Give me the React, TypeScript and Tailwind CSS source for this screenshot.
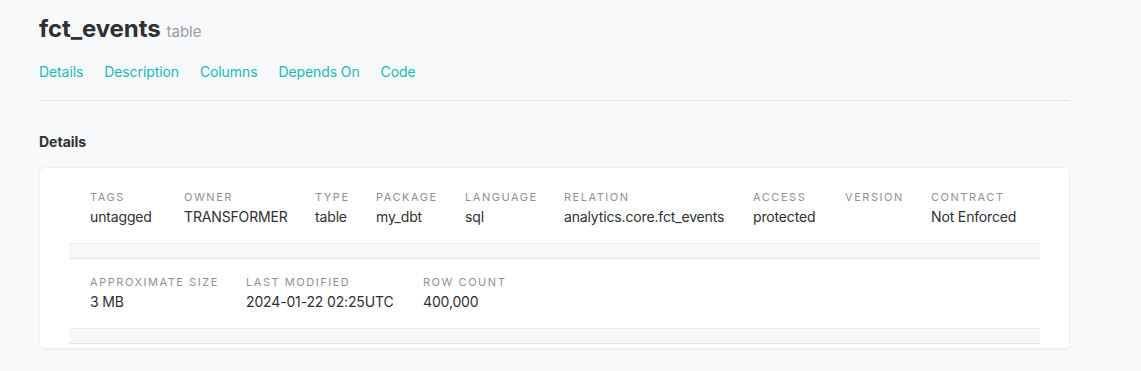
import React from "react";

type Field = { label: string; value: string; width?: string };

const rowOne: Field[] = [
  { label: "Tags", value: "untagged", width: "w-[94px]" },
  { label: "Owner", value: "TRANSFORMER", width: "w-[131px]" },
  { label: "Type", value: "table", width: "w-[61px]" },
  { label: "Package", value: "my_dbt", width: "w-[89px]" },
  { label: "Language", value: "sql", width: "w-[99px]" },
  { label: "Relation", value: "analytics.core.fct_events", width: "w-[189px]" },
  { label: "Access", value: "protected", width: "w-[92px]" },
  { label: "Version", value: "", width: "w-[86px]" },
  { label: "Contract", value: "Not Enforced" },
];

const rowTwo: Field[] = [
  { label: "Approximate Size", value: "3 MB", width: "w-[156px]" },
  { label: "Last Modified", value: "2024-01-22 02:25UTC", width: "w-[177px]" },
  { label: "Row Count", value: "400,000" },
];

const tabs = ["Details", "Description", "Columns", "Depends On", "Code"];

function StatRow({ fields, top }: { fields: Field[]; top: string }) {
  return (
    <div>
      <div className={`flex pl-[21px] ${top} pb-[16px]`}>
        {fields.map((f) => (
          <div key={f.label} className={`shrink-0 ${f.width ?? ""}`}>
            <div className="text-[11px] leading-[16px] uppercase tracking-[0.14em] text-[#8d9198]">
              {f.label}
            </div>
            <div className="mt-[2px] text-[14px] leading-[20px] tracking-[-0.15px] text-[#2e2f33] h-[20px]">
              {f.value}
            </div>
          </div>
        ))}
      </div>
      <div className="h-[16px] border-t border-b border-t-[#ececec] border-b-[#e4e4e4] bg-[#f8f8f8]" />
    </div>
  );
}

export default function App() {
  return (
    <div className="min-h-[371px] w-full bg-[#f8f9fb] font-['Inter',sans-serif]">
      <div className="w-[1031px] ml-[39px] pt-[13px]">
        <div className="flex items-baseline gap-[6px]">
          <h1 className="text-[24px] leading-[32px] font-bold tracking-[-0.1px] text-[#2f3034]">
            fct_events
          </h1>
          <span className="text-[15px] text-[#9a9da3]">table</span>
        </div>

        <div className="mt-[17px] flex gap-[21px] pb-[18px] border-b border-[#e3e5e8]">
          {tabs.map((t) => (
            <a
              key={t}
              className="text-[14px] leading-[20px] tracking-[-0.1px] text-[#19b8b8] cursor-pointer"
            >
              {t}
            </a>
          ))}
        </div>

        <h2 className="mt-[31px] text-[14px] leading-[20px] font-bold text-[#2f3034]">
          Details
        </h2>

        <div className="mt-[15px] bg-white rounded-[5px] shadow-[0_1px_2px_rgba(0,0,0,0.06)] border border-[#f0f1f3] pb-[4px]">
          <div className="mx-[29px]">
            <StatRow fields={rowOne} top="pt-[21px]" />
            <StatRow fields={rowTwo} top="pt-[15px]" />
          </div>
        </div>
      </div>
    </div>
  );
}
